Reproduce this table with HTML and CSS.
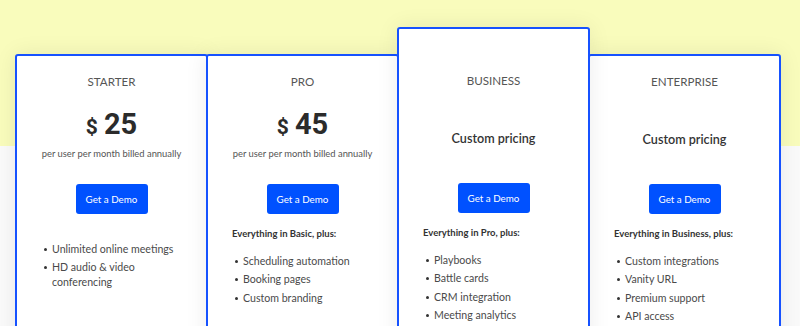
FILE: index.html
```html
<!DOCTYPE html>
<html lang="en">
<head>
<meta charset="utf-8">
<title>Pricing</title>
<link rel="stylesheet" href="styles.css">
</head>
<body>
<main class="page">
  <section class="plans">
    <article class="card">
      <h2 class="plan-name">STARTER</h2>
      <div class="price-area">
        <div class="price"><span class="currency">$</span><span class="amount">25</span></div>
        <p class="billing">per user per month billed annually</p>
      </div>
      <a class="demo-btn" href="#">Get a Demo</a>
      <ul class="features first">
        <li>Unlimited online meetings</li>
        <li>HD audio &amp; video conferencing</li>
      </ul>
    </article>
    <article class="card">
      <h2 class="plan-name">PRO</h2>
      <div class="price-area">
        <div class="price"><span class="currency">$</span><span class="amount">45</span></div>
        <p class="billing">per user per month billed annually</p>
      </div>
      <a class="demo-btn" href="#">Get a Demo</a>
      <p class="includes">Everything in Basic, plus:</p>
      <ul class="features">
        <li>Scheduling automation</li>
        <li>Booking pages</li>
        <li>Custom branding</li>
      </ul>
    </article>
    <article class="card featured">
      <h2 class="plan-name">BUSINESS</h2>
      <div class="price-area custom">
        <p class="custom-price">Custom pricing</p>
      </div>
      <a class="demo-btn" href="#">Get a Demo</a>
      <p class="includes">Everything in Pro, plus:</p>
      <ul class="features">
        <li>Playbooks</li>
        <li>Battle cards</li>
        <li>CRM integration</li>
        <li>Meeting analytics</li>
      </ul>
    </article>
    <article class="card">
      <h2 class="plan-name">ENTERPRISE</h2>
      <div class="price-area custom">
        <p class="custom-price">Custom pricing</p>
      </div>
      <a class="demo-btn" href="#">Get a Demo</a>
      <p class="includes">Everything in Business, plus:</p>
      <ul class="features">
        <li>Custom integrations</li>
        <li>Vanity URL</li>
        <li>Premium support</li>
        <li>API access</li>
      </ul>
    </article>
  </section>
</main>
</body>
</html>
```

FILE: styles.css
```css
* { box-sizing: border-box; }

html, body {
  margin: 0;
  padding: 0;
}

body {
  font-family: Lato, "Open Sans", sans-serif;
  color: #444;
  background: #fafafa;
  height: 326px;
  overflow: hidden;
}

.page {
  background: linear-gradient(to bottom, #f9fcbc 0, #f9fcbc 146px, #fafafa 146px, #fafafa 100%);
  height: 326px;
  padding-top: 54px;
  overflow: hidden;
}

.plans {
  display: flex;
  margin-left: 15px;
}

.card {
  width: 193px;
  height: 300px;
  background: #fff;
  border: 2px solid #1652ff;
  border-radius: 3px;
  padding: 18px 24px 0;
  display: flex;
  flex-direction: column;
  box-shadow: 0 0 22px rgba(0, 0, 0, 0.08);
}

.card + .card {
  margin-left: -2px;
}

.card.featured {
  margin-top: -27px;
  height: 327px;
  padding-top: 44px;
  position: relative;
  z-index: 1;
}

.plan-name {
  margin: 0;
  text-align: center;
  font-size: 11.6px;
  line-height: 16px;
  font-weight: 400;
  color: #555;
}

.price-area {
  height: 71px;
  display: flex;
  flex-direction: column;
  align-items: center;
  padding-top: 17px;
}

.price-area.custom {
  padding-top: 41px;
}

.price {
  font-family: Roboto, "Liberation Sans", sans-serif;
  font-weight: 700;
  color: #2b2b2b;
  line-height: 34px;
  height: 34px;
  display: flex;
  align-items: baseline;
}

.currency {
  font-size: 21px;
  margin-right: 6px;
}

.amount {
  font-size: 29px;
}

.billing {
  margin: 6px 0 0;
  font-size: 9.4px;
  line-height: 14px;
  color: #555;
  white-space: nowrap;
}

.custom-price {
  margin: 0;
  font-size: 12.6px;
  line-height: 18px;
  font-weight: 600;
  color: #333;
}

.demo-btn {
  align-self: center;
  width: 72px;
  height: 30px;
  margin-top: 23px;
  background: #0051ff;
  color: #fff;
  border-radius: 3px;
  text-decoration: none;
  font-size: 9.8px;
  line-height: 30px;
  text-align: center;
  white-space: nowrap;
}

.includes {
  margin: 13px 0 0;
  font-size: 9.5px;
  line-height: 14px;
  font-weight: 700;
  color: #333;
  white-space: nowrap;
}

.features {
  list-style: none;
  margin: 12.5px 0 0;
  padding: 0 0 0 11px;
  font-size: 10.6px;
  line-height: 15px;
  color: #4a4a4a;
}

.features.first {
  margin-top: 27.5px;
}

.features li {
  position: relative;
  margin-bottom: 3.5px;
}

.features li::before {
  content: "";
  position: absolute;
  left: -8px;
  top: 6px;
  width: 3px;
  height: 3px;
  border-radius: 50%;
  background: #333;
}
```
